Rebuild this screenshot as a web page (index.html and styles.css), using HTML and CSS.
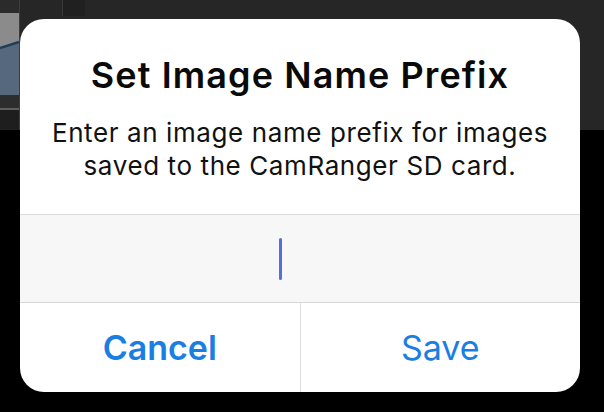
FILE: index.html
```html
<!DOCTYPE html>
<html>
<head>
<meta charset="utf-8">
<link rel="stylesheet" href="styles.css">
</head>
<body>
<div class="screen">
  <div class="topbar">
    <div class="thumbcol">
      <div class="thumb-top"></div>
      <div class="thumb">
        <svg class="curve" width="19" height="82" viewBox="0 0 19 82">
          <rect x="0" y="0" width="19" height="82" fill="#56687b"/>
          <path d="M0 0 H19 V29 Q10 32 0 35 Z" fill="#8b8b8b"/>
          <path d="M0 35 Q10 32 19 29" stroke="#1d3f5c" stroke-width="2.5" fill="none"/>
        </svg>
      </div>
      <div class="thumb-bottom"></div>
      <div class="thumb-line"></div>
      <div class="thumb-foot"></div>
    </div>
    <div class="topmain">
      <div class="topstrip"></div>
    </div>
  </div>

  <div class="alert">
    <div class="alert-head">
      <div class="alert-title">Set Image Name Prefix</div>
      <div class="alert-msg">Enter an image name prefix for images saved to the CamRanger SD card.</div>
    </div>
    <div class="alert-field">
      <span class="caret"></span>
    </div>
    <div class="alert-actions">
      <div class="btn btn-cancel">Cancel</div>
      <div class="btn btn-save">Save</div>
    </div>
  </div>
</div>
</body>
</html>
```

FILE: styles.css
```css
html, body {
  margin: 0;
  padding: 0;
  background: #000;
}

.screen {
  position: relative;
  width: 604px;
  height: 412px;
  background: #000;
  overflow: hidden;
  font-family: Inter, "Noto Sans", sans-serif;
}

.topbar {
  display: flex;
  height: 130px;
}

.thumbcol {
  width: 19px;
  display: flex;
  flex-direction: column;
  border-right: 1px solid #3d3d3d;
}

.thumb-top {
  height: 13px;
  background: #2b2b2b;
}

.thumb {
  height: 82px;
}

.curve {
  display: block;
}

.thumb-bottom {
  height: 13px;
  background: #2d2d2d;
}

.thumb-line {
  height: 2px;
  background: #5e5e5e;
}

.thumb-foot {
  flex: 1;
  background: #1e1e1e;
}

.topmain {
  flex: 1;
  background: #262626;
  display: flex;
}

.topstrip {
  width: 22px;
  margin-left: 42px;
  height: 16px;
  background: #202020;
  border-left: 1px solid #3a3a3a;
}

.alert {
  position: absolute;
  left: 20px;
  top: 19px;
  width: 560px;
  height: 373px;
  background: #fff;
  border-radius: 24px;
  overflow: hidden;
  display: flex;
  flex-direction: column;
}

.alert-head {
  padding-top: 35px;
  text-align: center;
}

.alert-title {
  font-size: 36px;
  line-height: 42px;
  font-weight: 600;
  color: #0a0a0a;
  letter-spacing: 1.1px;
}

.alert-msg {
  margin: 20px auto 0;
  width: 540px;
  font-size: 26px;
  line-height: 33px;
  color: #111;
  letter-spacing: 0.6px;
}

.alert-field {
  margin-top: 32px;
  height: 87px;
  background: #f7f7f7;
  border-top: 1px solid #dadada;
  border-bottom: 1px solid #d6d6d6;
  display: flex;
  align-items: center;
  justify-content: center;
}

.caret {
  display: block;
  width: 3px;
  height: 42px;
  border-radius: 2px;
  background: #5570d8;
  margin-right: 40px;
}

.alert-actions {
  flex: 1;
  display: flex;
}

.btn {
  flex: 1;
  display: flex;
  align-items: center;
  justify-content: center;
  font-size: 34px;
  color: #1b7ee2;
}

.btn-cancel {
  font-weight: 600;
  border-right: 1px solid #dedede;
}

.btn-save {
  font-weight: 400;
}
```
